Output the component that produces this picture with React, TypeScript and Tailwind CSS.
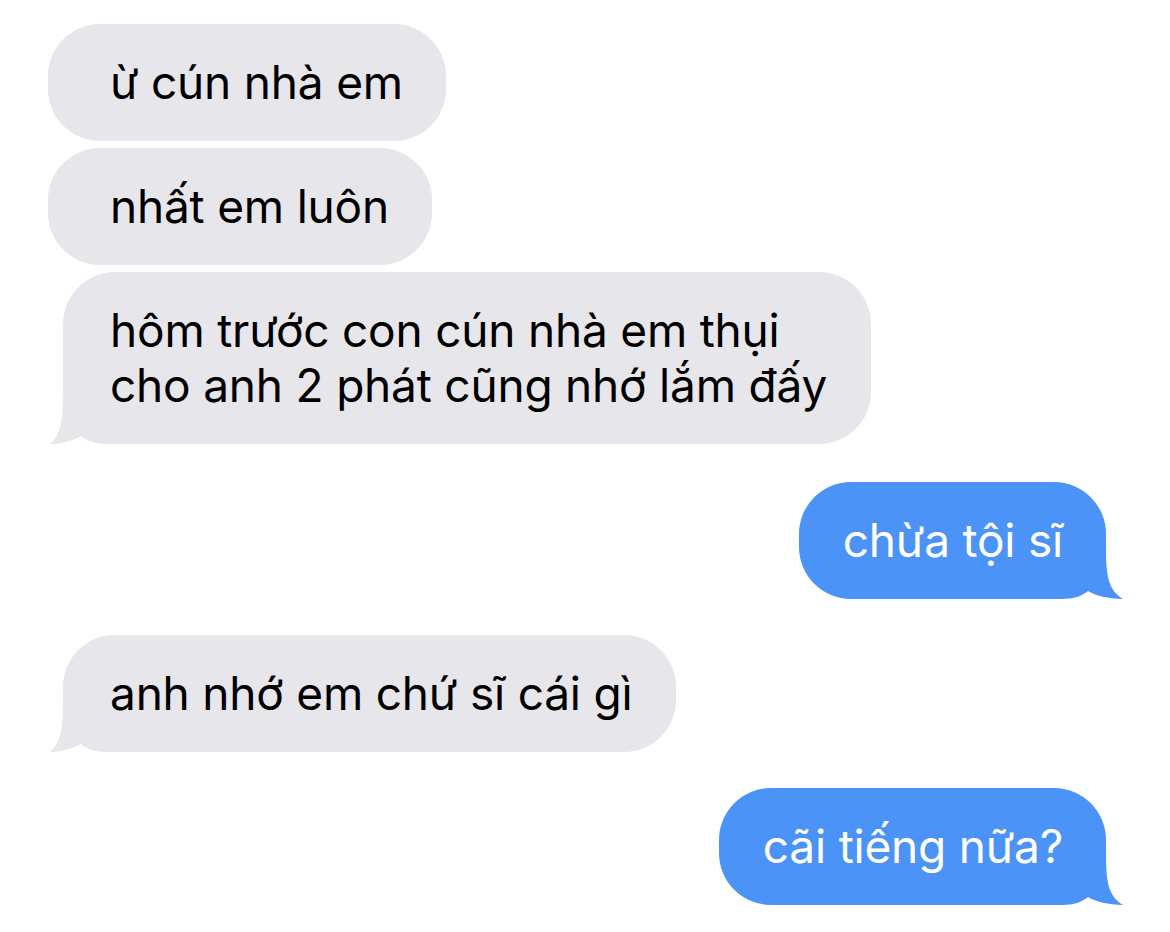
import React from 'react';

type Side = 'in' | 'out';

const GRAY = '#e6e6eb';
const BLUE = '#4b93f6';

// iMessage-style tail, drawn at the bottom corner of the bubble
const Tail: React.FC<{ side: Side }> = ({ side }) => {
  const e = side === 'in' ? 14 : 18; // where the body edge sits inside the svg
  const color = side === 'in' ? GRAY : BLUE;
  return (
    <svg
      width="64"
      height="56"
      viewBox="0 0 64 56"
      className={
        side === 'in'
          ? 'absolute bottom-0 left-[-14px]'
          : 'absolute bottom-0 right-[-18px] -scale-x-100'
      }
    >
      <path d={`M${e + 2} 4 L${e} 4 C${e} 32 ${e - 2} 47 1 56 L${e + 2} 56 Z`} fill={color} />
      <path
        d={`M1 56 C${e - 2} 55.5 ${e + 10} 53 ${e + 18} 48 C${e + 24} 53 ${e + 32} 56 ${e + 44} 56 Z`}
        fill="#ffffff"
      />
    </svg>
  );
};

const Bubble: React.FC<{
  side: Side;
  tail?: boolean;
  className?: string;
  children: React.ReactNode;
}> = ({ side, tail, className = '', children }) => {
  const base =
    side === 'in'
      ? 'bg-[#e6e6eb] text-black self-start'
      : 'bg-[#4b93f6] text-white self-end';
  const corner = tail ? (side === 'in' ? 'rounded-bl-none' : 'rounded-br-none') : '';
  return (
    <div
      className={`relative w-fit whitespace-nowrap rounded-[52px] py-[31px] text-[46px] leading-[55px] tracking-[-0.2px] ${base} ${corner} ${className}`}
    >
      {children}
      {tail && <Tail side={side} />}
    </div>
  );
};

export default function App() {
  return (
    <div
      className="flex min-h-[932px] w-[1170px] flex-col bg-white pl-[48px] pr-[64px] pt-[24px]"
      style={{ fontFamily: 'Inter, "Noto Sans", sans-serif' }}
    >
      <Bubble side="in" className="pl-[62px] pr-[43px]">
        ừ cún nhà em
      </Bubble>
      <Bubble side="in" className="mt-[7px] pl-[62px] pr-[43px]">
        nhất em luôn
      </Bubble>
      <Bubble side="in" tail className="ml-[15px] mt-[7px] pl-[47px] pr-[44px]">
        hôm trước con cún nhà em thụi
        <br />
        cho anh 2 phát cũng nhớ lắm đấy
      </Bubble>
      <Bubble side="out" tail className="mt-[38px] pl-[44px] pr-[43px]">
        chừa tội sĩ
      </Bubble>
      <Bubble side="in" tail className="ml-[15px] mt-[36px] pl-[47px] pr-[44px]">
        anh nhớ em chứ sĩ cái gì
      </Bubble>
      <Bubble side="out" tail className="mt-[36px] pl-[44px] pr-[43px]">
        cãi tiếng nữa?
      </Bubble>
    </div>
  );
}
